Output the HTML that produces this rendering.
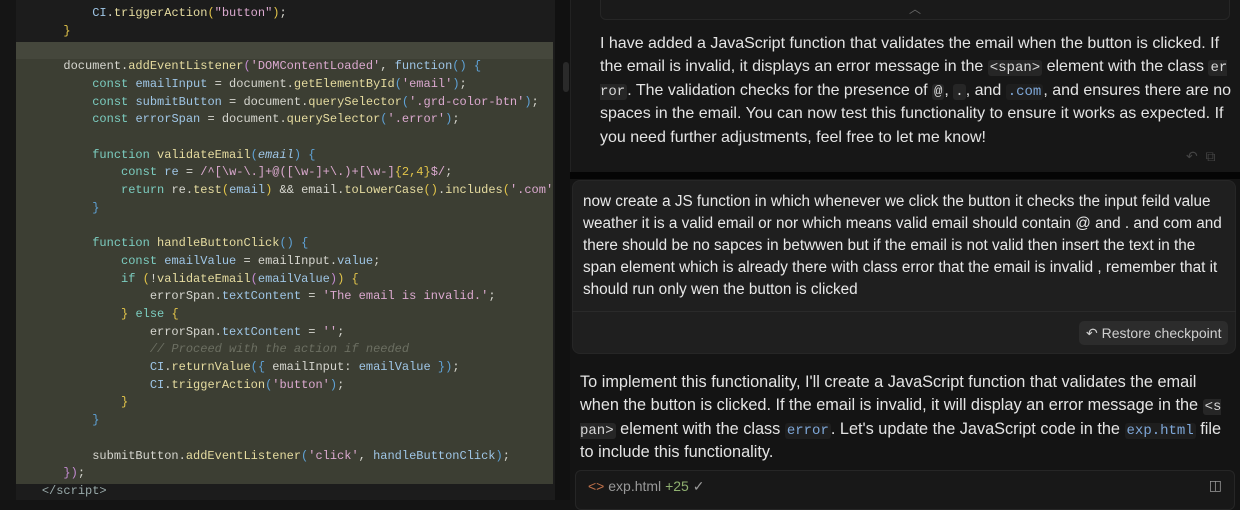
<!DOCTYPE html>
<html><head><style>
*{margin:0;padding:0;box-sizing:border-box}
body{width:1240px;height:500px;background:#141414;overflow:hidden;position:relative;font-family:"Liberation Sans",sans-serif}
#ed{position:absolute;left:0;top:0;width:555px;height:500px;background:#1c1c1c}
#gut{position:absolute;left:0;top:0;width:16px;height:500px;background:#151515}
#hl{position:absolute;left:16px;top:42px;width:537px;height:442px;background:#3c3e33}
#hl2{position:absolute;left:16px;top:42px;width:537px;height:17px;background:#45473c}
pre{position:absolute;left:13px;top:5px;font-family:"Liberation Mono",monospace;font-size:12px;line-height:17.7px;color:#d6d6cf;white-space:pre}
.k{color:#7ccdc0}.v{color:#9fc6e6}.f{color:#e6dca0}.s{color:#dba9cf}.y{color:#e3c54a}.b{color:#5fa2d6}.c{color:#6c6f62;font-style:italic}.p{color:#c48bd2}
#sep{position:absolute;left:555px;top:0;width:15px;height:500px;background:#111}
#sb{position:absolute;left:563px;top:62px;width:6px;height:30px;background:#2a2a2a;border-radius:3px}
#ai1{position:absolute;left:570px;top:0;width:670px;height:172px;background:#171717;border-left:1px solid #222}
#band{position:absolute;left:570px;top:172px;width:670px;height:7px;background:#050505}
#top{position:absolute;left:600px;top:-10px;width:630px;height:30px;border:1px solid #262626;border-radius:6px;background:#1a1a1a;color:#666;text-align:center;font-size:12px;line-height:36px}
.t{position:absolute;color:#e4e4e4;font-size:16px;line-height:23.4px}
code{font-family:"Liberation Mono",monospace;font-size:14px;line-height:1;background:#262626;border-radius:3px;padding:0 2px;color:#d8d8d8;letter-spacing:0;word-break:break-all}
code.bl{color:#7ea7d8;background:#1e1e1e}
#user{position:absolute;left:572px;top:180px;width:664px;height:174px;background:#1f1f1f;border-radius:8px;border:1px solid #262626}
#udiv{position:absolute;left:572px;top:311px;width:664px;height:1px;background:#2a2a2a}
#ut{position:absolute;left:583px;top:191px;width:645px;color:#e8e8e8;font-size:15.3px;line-height:22px}
#rest{position:absolute;left:1079px;top:321px;width:149px;height:24px;background:#2c2c2c;border-radius:5px;color:#cfcfcf;font-size:14px;line-height:24px;padding-left:7px}
#file{position:absolute;left:575px;top:470px;width:660px;height:40px;border:1px solid #262626;border-radius:6px;background:#181818;color:#999;font-size:14px;padding:7px 12px}
</style></head><body>
<div id="ed"></div><div id="gut"></div><div id="hl"></div><div id="hl2"></div>
<pre>           <span class="v">CI</span>.<span class="f">triggerAction</span><span class="y">(</span><span class="s">"button"</span><span class="y">)</span>;
       <span class="y">}</span>

       document.<span class="f">addEventListener</span><span class="p">(</span><span class="s">'DOMContentLoaded'</span>, <span class="v">function</span><span class="b">()</span> <span class="b">{</span>
           <span class="k">const</span> <span class="v">emailInput</span> = document.<span class="f">getElementById</span><span class="b">(</span><span class="s">'email'</span><span class="b">)</span>;
           <span class="k">const</span> <span class="v">submitButton</span> = document.<span class="f">querySelector</span><span class="b">(</span><span class="s">'.grd-color-btn'</span><span class="b">)</span>;
           <span class="k">const</span> <span class="v">errorSpan</span> = document.<span class="f">querySelector</span><span class="b">(</span><span class="s">'.error'</span><span class="b">)</span>;

           <span class="k">function</span> <span class="f">validateEmail</span><span class="b">(</span><span class="v"><i>email</i></span><span class="b">)</span> <span class="b">{</span>
               <span class="k">const</span> <span class="v">re</span> = <span class="s">/^[\w-\.]+@([\w-]+\.)+[\w-]</span><span class="y">{2,4}</span><span class="s">$/</span>;
               <span class="k">return</span> re.<span class="f">test</span><span class="y">(</span><span class="v">email</span><span class="y">)</span> &amp;&amp; email.<span class="f">toLowerCase</span><span class="y">()</span>.<span class="f">includes</span><span class="y">(</span><span class="s">'.com'</span>
           <span class="b">}</span>

           <span class="k">function</span> <span class="f">handleButtonClick</span><span class="b">()</span> <span class="b">{</span>
               <span class="k">const</span> <span class="v">emailValue</span> = emailInput.<span class="v">value</span>;
               <span class="k">if</span> <span class="y">(</span>!<span class="f">validateEmail</span><span class="p">(</span><span class="v">emailValue</span><span class="p">)</span><span class="y">)</span> <span class="y">{</span>
                   errorSpan.<span class="v">textContent</span> = <span class="s">'The email is invalid.'</span>;
               <span class="y">}</span> <span class="k">else</span> <span class="y">{</span>
                   errorSpan.<span class="v">textContent</span> = <span class="s">''</span>;
                   <span class="c">// Proceed with the action if needed</span>
                   <span class="v">CI</span>.<span class="f">returnValue</span><span class="b">({</span> emailInput: <span class="v">emailValue</span> <span class="b">})</span>;
                   <span class="v">CI</span>.<span class="f">triggerAction</span><span class="b">(</span><span class="s">'button'</span><span class="b">)</span>;
               <span class="y">}</span>
           <span class="b">}</span>

           submitButton.<span class="f">addEventListener</span><span class="b">(</span><span class="s">'click'</span>, <span class="v">handleButtonClick</span><span class="b">)</span>;
       <span class="p">})</span>;
    <span style="color:#9aa">&lt;/script&gt;</span></pre>
<div id="sep"></div><div id="sb"></div>
<div id="ai1"></div>
<div id="top">︿</div>
<div class="t" style="left:600px;top:32px;width:634px">I have added a JavaScript function that validates the email when the button is clicked. If the email is invalid, it displays an error message in the <code>&lt;span&gt;</code> element with the class <code>error</code>. The validation checks for the presence of <code>@</code>, <code>.</code>, and <code class="bl">.com</code>, and ensures there are no spaces in the email. You can now test this functionality to ensure it works as expected. If you need further adjustments, feel free to let me know!</div>
<div style="position:absolute;left:1186px;top:148px;color:#444;font-size:14px">↶ &nbsp;⧉</div>
<div id="band"></div>
<div id="user"></div><div id="udiv"></div>
<div id="ut">now create a JS function in which whenever we click the button it checks the input feild value weather it is a valid email or nor which means valid email should contain @ and . and com and there should be no sapces in betwwen but if the email is not valid then insert the text in the span element which is already there with class error that the email is invalid , remember that it should run only wen the button is clicked</div>
<div id="rest">↶ Restore checkpoint</div>
<div class="t" style="left:580px;top:371px;width:646px;font-size:16.3px">To implement this functionality, I'll create a JavaScript function that validates the email when the button is clicked. If the email is invalid, it will display an error message in the <code>&lt;span&gt;</code> element with the class <code class="bl">error</code>. Let's update the JavaScript code in the <code class="bl">exp.html</code> file to include this functionality.</div>
<div id="file"><span style="color:#c0714a">&lt;&gt;</span> exp.html <span style="color:#8fb070">+25</span> ✓<span style="position:absolute;right:12px;top:6px">◫</span></div>
</body></html>
